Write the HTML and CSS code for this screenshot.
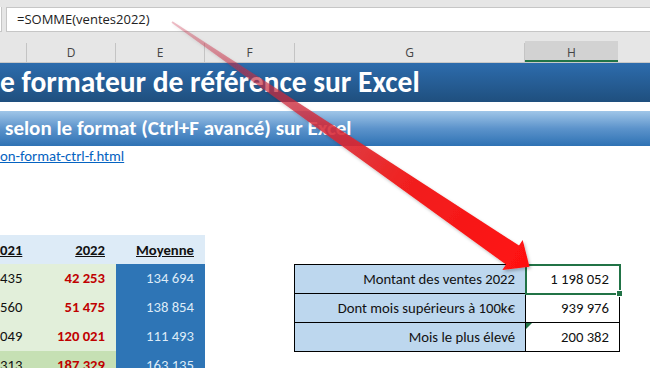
FILE: index.html
```html
<!DOCTYPE html>
<html lang="fr">
<head>
    <meta charset="UTF-8">
    <title>Formateur de référence sur Excel</title>
    <link rel="stylesheet" href="styles.css">
</head>
<body>
    <div id="formula-bar">
        <div class="name-box"></div>
        <div class="formula">=SOMME(ventes2022)</div>
    </div>

    <div id="col-headers">
        <div class="col-head w-c"></div>
        <div class="col-head w-d">D</div>
        <div class="col-head w-e">E</div>
        <div class="col-head w-f">F</div>
        <div class="col-head w-g">G</div>
        <div class="col-head w-h active">H</div>
        <div class="col-head w-i"></div>
    </div>

    <div class="title-band">e formateur de référence sur Excel</div>
    <div class="subtitle-band">selon le format (Ctrl+F avancé) sur Excel</div>
    <div class="link-row"><a href="#">on-format-ctrl-f.html</a></div>

    <div id="sheet">
        <div class="sales">
            <div class="cell head">021</div>
            <div class="cell head">2022</div>
            <div class="cell head">Moyenne</div>

            <div class="cell green">435</div>
            <div class="cell green red">42 253</div>
            <div class="cell avg">134 694</div>

            <div class="cell green">560</div>
            <div class="cell green red">51 475</div>
            <div class="cell avg">138 854</div>

            <div class="cell green">049</div>
            <div class="cell green red">120 021</div>
            <div class="cell avg">111 493</div>

            <div class="cell green dark">313</div>
            <div class="cell green dark red">187 329</div>
            <div class="cell avg">163 135</div>
        </div>

        <div class="summary">
            <div class="label">Montant des ventes 2022</div>
            <div class="value selected">1 198 052<span class="fill-handle"></span></div>
            <div class="label">Dont mois supérieurs à 100k€</div>
            <div class="value">939 976</div>
            <div class="label">Mois le plus élevé</div>
            <div class="value">200 382<span class="error-mark"></span></div>
        </div>
    </div>

    <svg id="arrow" width="650" height="368" viewBox="0 0 650 368">
        <defs>
            <linearGradient id="arrow-fill" gradientUnits="userSpaceOnUse" x1="172" y1="22" x2="529" y2="266">
                <stop offset="0" stop-color="#c8304a" stop-opacity="0.3"/>
                <stop offset="0.35" stop-color="#d0283a" stop-opacity="0.75"/>
                <stop offset="0.65" stop-color="#f02020" stop-opacity="1"/>
                <stop offset="1" stop-color="#ff1010" stop-opacity="1"/>
            </linearGradient>
            <filter id="arrow-shadow" x="-10%" y="-10%" width="130%" height="130%">
                <feDropShadow dx="1.5" dy="2" stdDeviation="1.5" flood-color="#000" flood-opacity="0.25"/>
            </filter>
        </defs>
        <polygon fill="url(#arrow-fill)" filter="url(#arrow-shadow)"
            points="172.5,21.3 519,245.5 522.7,240.1 529.5,266.8 502.3,269.9 506,264.5 171.5,22.7"/>
    </svg>
</body>
</html>
```

FILE: styles.css
```css
body {
    margin: 0;
    width: 650px;
    height: 368px;
    overflow: hidden;
    background: #ffffff;
    font-family: Carlito, Calibri, Lato, sans-serif;
    position: relative;
}

#formula-bar {
    display: flex;
    height: 33px;
    background: #e6e6e6;
    padding-top: 7px;
    box-sizing: border-box;
    gap: 4px;
}

.name-box {
    width: 2px;
    height: 25px;
    background: #ffffff;
    border-right: 1px solid #c6c6c6;
    border-bottom: 1px solid #c6c6c6;
    box-sizing: border-box;
}

.formula {
    flex-grow: 1;
    height: 25px;
    background: #ffffff;
    border: 1px solid #c6c6c6;
    border-right: none;
    box-sizing: border-box;
    padding-left: 10px;
    font-family: "Open Sans", "DejaVu Sans", sans-serif;
    font-size: 13px;
    line-height: 23px;
    color: #222222;
}

#col-headers {
    display: flex;
    height: 30px;
    background: #e6e6e6;
    border-bottom: 1px solid #c8c8c8;
    box-sizing: border-box;
    padding-top: 10px;
}

.col-head {
    box-sizing: border-box;
    border-right: 1px solid #c4c4c4;
    text-align: center;
    font-family: "Open Sans", "DejaVu Sans", sans-serif;
    font-size: 12px;
    line-height: 19px;
    color: #444444;
}

.col-head.active {
    background: #d2d2d2;
    border-bottom: 2px solid #217346;
    border-right: none;
    margin-top: -2px;
    line-height: 19px;
    padding-top: 2px;
}

.w-c { width: 27px; }
.w-d { width: 89px; }
.w-e { width: 89px; }
.w-f { width: 90px; }
.w-g { width: 230px; }
.w-h { width: 93px; }
.w-i { flex-grow: 1; border-right: none; }

.title-band {
    height: 39px;
    background: linear-gradient(#2d6cad, #1f4f7e);
    color: #ffffff;
    font-weight: bold;
    font-size: 29.5px;
    line-height: 39px;
    white-space: nowrap;
    margin-bottom: 9px;
}

.subtitle-band {
    height: 35px;
    background: linear-gradient(#a0c6e8, #5c93cb 50%, #2e72b4);
    color: #ffffff;
    font-weight: bold;
    font-size: 21px;
    line-height: 35px;
    padding-left: 5px;
    white-space: nowrap;
}

.link-row {
    height: 21px;
    font-size: 14.8px;
    line-height: 21px;
}

.link-row a {
    color: #0563c1;
    text-decoration: underline;
}

#sheet {
    display: flex;
    margin-top: 68px;
}

.sales {
    display: grid;
    grid-template-columns: 27px 89px 89px;
    grid-auto-rows: 29px;
}

.cell {
    text-align: right;
    padding-right: 11px;
    font-size: 14.7px;
    line-height: 29px;
    color: #111111;
    white-space: nowrap;
}

.cell.head {
    background: #ddebf7;
    font-weight: bold;
    text-decoration: underline;
    line-height: 31px;
}

.cell.green {
    background: #e2efda;
}

.cell.green.dark {
    background: #c6e0b4;
}

.cell.red {
    color: #c00000;
    font-weight: bold;
}

.cell.avg {
    background: #2e75b6;
    color: #ddebf7;
}

.summary {
    display: grid;
    grid-template-columns: 231px 94px;
    grid-auto-rows: 29px;
    margin-top: 29px;
    margin-left: 89px;
    border-left: 1px solid #000000;
    border-top: 1px solid #000000;
    align-self: flex-start;
}

.summary .label,
.summary .value {
    border-right: 1px solid #000000;
    border-bottom: 1px solid #000000;
    text-align: right;
    padding-right: 10px;
    font-size: 14.7px;
    line-height: 28px;
    color: #111111;
    white-space: nowrap;
    position: relative;
}

.summary .label {
    background: #bdd7ee;
}

.summary .value {
    background: #ffffff;
}

.summary .value.selected {
    outline: 2px solid #217346;
    outline-offset: -1px;
    z-index: 1;
}

.fill-handle {
    position: absolute;
    right: -4px;
    bottom: -4px;
    width: 5px;
    height: 5px;
    background: #217346;
    border: 1px solid #ffffff;
}

.error-mark {
    position: absolute;
    left: 0;
    top: 0;
    width: 0;
    height: 0;
    border-top: 6px solid #217346;
    border-right: 6px solid transparent;
}

#arrow {
    position: absolute;
    left: 0;
    top: 0;
    pointer-events: none;
    z-index: 5;
}
```
